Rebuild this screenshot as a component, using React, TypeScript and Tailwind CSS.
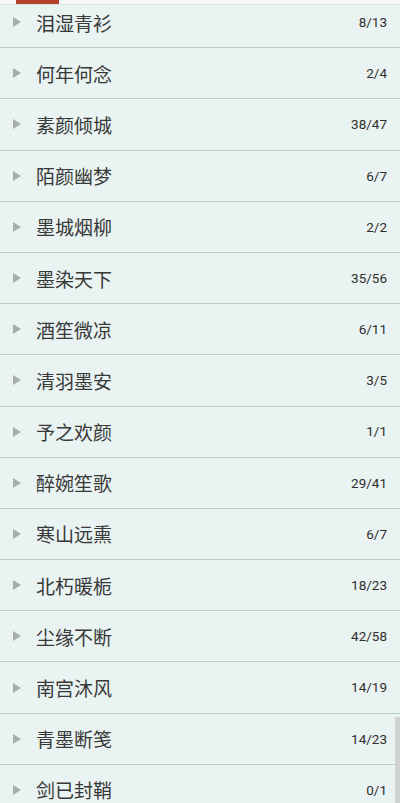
const rows: [string, string][] = [
  ['泪湿青衫', '8/13'],
  ['何年何念', '2/4'],
  ['素颜倾城', '38/47'],
  ['陌颜幽梦', '6/7'],
  ['墨城烟柳', '2/2'],
  ['墨染天下', '35/56'],
  ['酒笙微凉', '6/11'],
  ['清羽墨安', '3/5'],
  ['予之欢颜', '1/1'],
  ['醉婉笙歌', '29/41'],
  ['寒山远熏', '6/7'],
  ['北朽暖栀', '18/23'],
  ['尘缘不断', '42/58'],
  ['南宫沐风', '14/19'],
  ['青墨断笺', '14/23'],
  ['剑已封鞘', '0/1'],
];

export default function App() {
  return (
    <div className="relative h-[803px] w-[400px] overflow-hidden bg-[#e9f3f2] font-['Noto_Sans_CJK_SC',sans-serif]">
      <div className="relative z-10 h-[5px] border-b border-[#d6e2e0] bg-[#f4f8f8]">
        <div className="ml-[16px] h-[4px] w-[43px] bg-[#b5402c]" />
      </div>
      <div className="-mt-[8px]">
        {rows.map(([name, count]) => (
          <div
            key={name}
            className="flex h-[51.2px] items-center border-b border-[#b9d2ce] pr-[13px]"
          >
            <svg width="8" height="10" viewBox="0 0 8 10" className="ml-[13px] mr-[15px] shrink-0">
              <polygon points="0,0 8,5 0,10" fill="#a9acac" />
            </svg>
            <span className="flex-1 text-[19px] leading-none text-[#383838]">{name}</span>
            <span className="font-['Roboto',sans-serif] text-[13.5px] text-[#2e2e2e]">{count}</span>
          </div>
        ))}
      </div>
      <div className="absolute right-0 top-[717px] h-[86px] w-[5px] bg-[#cfd3d3]" />
    </div>
  );
}
